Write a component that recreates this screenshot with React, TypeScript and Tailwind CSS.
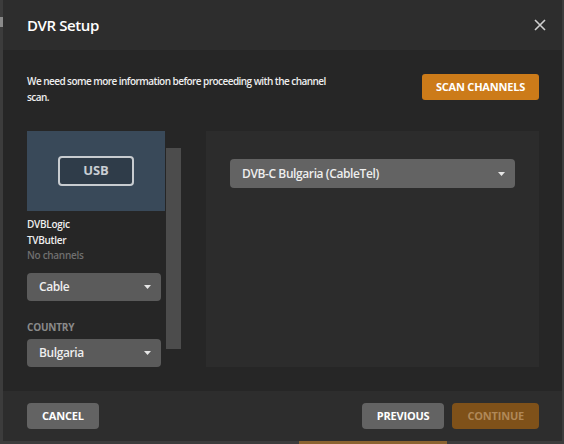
import React from "react";

function Caret() {
  return (
    <svg width="7" height="4" viewBox="0 0 7 4" className="shrink-0">
      <path d="M0 0h7L3.5 4z" fill="#e6e6e6" />
    </svg>
  );
}

function Select({ label, className = "" }: { label: string; className?: string }) {
  return (
    <div
      className={`flex items-center justify-between rounded-[4px] pl-3 pr-[10px] text-[12px] font-semibold tracking-[-0.4px] text-[#eeeeee] ${className}`}
    >
      <span>{label}</span>
      <Caret />
    </div>
  );
}

function FooterButton({ label, tone }: { label: string; tone: "gray" | "orange" }) {
  return (
    <button
      className={
        tone === "gray"
          ? "h-[26px] rounded-[4px] bg-[#636363] px-[15px] text-[11px] font-bold uppercase tracking-[-0.2px] text-white"
          : "h-[26px] rounded-[4px] bg-[#7f5119] px-[15px] text-[11px] font-bold uppercase tracking-[-0.2px] text-[#b08858]"
      }
    >
      {label}
    </button>
  );
}

export default function App() {
  return (
    <div
      className="relative h-[444px] w-[564px] overflow-hidden bg-[#3c3c3c]"
      style={{ fontFamily: '"Open Sans", "Noto Sans", sans-serif' }}
    >
      {/* page behind the modal */}
      <div className="absolute left-0 top-[17px] h-[10px] w-[3px] bg-[#8a8a8a]" />
      <div className="absolute left-[299px] top-[441px] flex h-[26px] w-[148px] justify-center bg-[#8a6330] pt-[1px] text-[11px] font-bold uppercase text-[#c9b49a]">
        Set up Plex DVR
      </div>

      <div className="relative ml-[3px] flex h-[441px] w-[559px] flex-col">
        <div className="flex h-[50px] items-center justify-between bg-[#2d2d2d] pl-[24px] pr-[16px]">
          <h1 className="text-[15px] font-semibold tracking-[-0.4px] text-white">DVR Setup</h1>
          <svg width="12" height="12" viewBox="0 0 12 12">
            <path d="M1 1l10 10M11 1L1 11" stroke="#cfcfcf" strokeWidth="1.6" />
          </svg>
        </div>

        <div className="flex flex-1 flex-col bg-[#262626] pl-[24px] pr-[23px] pt-[24px]">
          <div className="flex items-start justify-between">
            <p className="mt-[-1px] w-[305px] text-[10px] font-semibold leading-[16px] tracking-[-0.55px] text-[#eeeeee]">
              We need some more information before proceeding with the channel scan.
            </p>
            <button className="h-[26px] w-[117px] rounded-[3px] bg-[#cc7b19] text-[11px] font-bold uppercase tracking-[-0.2px] text-white">
              Scan Channels
            </button>
          </div>

          <div className="mt-[26px] flex h-[236px] gap-[25px]">
            <div className="flex">
              <div className="flex w-[138px] flex-col">
                <div className="flex h-[80px] items-center justify-center bg-[#394959]">
                  <div className="flex h-[30px] w-[76px] items-center justify-center rounded-[4px] border-2 border-[#c8ccd0] bg-[#2f3c49] text-[13px] font-bold text-[#c9ced3]">
                    USB
                  </div>
                </div>
                <div className="mt-[5px] text-[10px] font-semibold leading-[16px] tracking-[-0.3px] text-[#eeeeee]">
                  <div>DVBLogic</div>
                  <div>TVButler</div>
                  <div className="leading-[14px] text-[#6f6f6f]">No channels</div>
                </div>
                <Select label="Cable" className="mt-[11px] h-[28px] w-[134px] bg-[#5b5b5b]" />
                <div className="mt-[19px] text-[10px] font-bold uppercase leading-[14px] tracking-[-0.2px] text-[#8a8a8a]">
                  Country
                </div>
                <Select label="Bulgaria" className="mt-[5px] h-[28px] w-[134px] bg-[#5b5b5b]" />
              </div>
              <div className="ml-[1px] mt-[17px] h-[201px] w-[15px] bg-[#4c4c4c]" />
            </div>

            <div className="flex-1 bg-[#2c2c2c] pl-[24px] pr-[24px] pt-[28px]">
              <Select label="DVB-C Bulgaria (CableTel)" className="h-[29px] bg-[#636363]" />
            </div>
          </div>
        </div>

        <div className="flex h-[50px] items-center justify-between bg-[#2d2d2d] pl-[24px] pr-[23px]">
          <FooterButton label="Cancel" tone="gray" />
          <div className="flex gap-[8px]">
            <FooterButton label="Previous" tone="gray" />
            <FooterButton label="Continue" tone="orange" />
          </div>
        </div>
      </div>
    </div>
  );
}
